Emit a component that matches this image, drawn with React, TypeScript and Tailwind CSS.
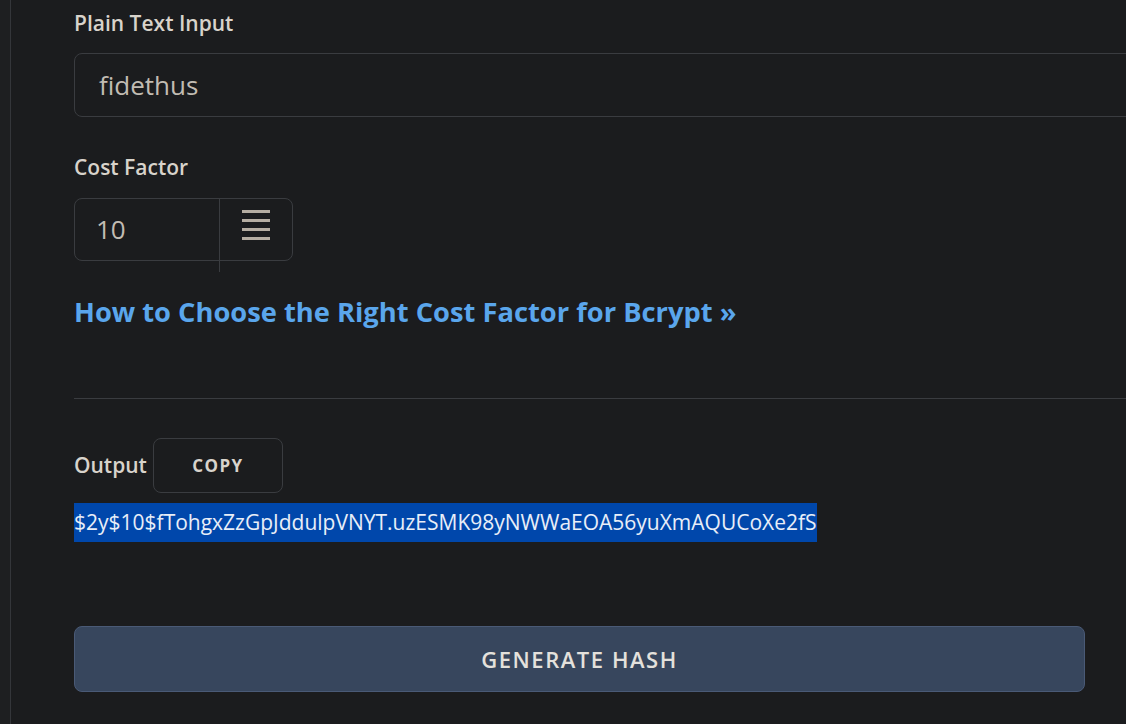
export default function App() {
  const font = { fontFamily: '"Open Sans", "Noto Sans", sans-serif' };
  return (
    <div className="flex h-[724px] w-[1126px] overflow-hidden bg-[#1b1c1e]" style={font}>
      <div className="w-[11px] shrink-0 border-r border-[#34363a] bg-[#1e1f21]" />
      <div className="flex min-w-0 flex-1 flex-col pl-[63px]">
        <label className="mt-[9px] text-[21px] font-semibold leading-[28px] text-[#d8d3cb]">Plain Text Input</label>
        <div className="mt-[16px] -mr-[20px] flex h-[64px] items-center rounded-[8px] border border-[#3a3c40] bg-[#1b1c1e] pl-[24px]">
          <span className="text-[26px] text-[#c2bcb3]">fidethus</span>
        </div>

        <label className="mt-[36px] text-[21px] font-semibold leading-[28px] text-[#d8d3cb]">Cost Factor</label>
        <div className="relative mt-[17px] flex h-[63px] w-[219px] rounded-[8px] border border-[#3a3c40]">
          <div className="flex w-[145px] items-center pl-[21px] text-[26px] text-[#c2bcb3]">10</div>
          <div className="absolute left-[144px] top-0 h-[73px] w-px bg-[#3a3c40]" />
          <div className="flex flex-1 flex-col gap-[6px] pl-[22px] pt-[11px]">
            <div className="h-[3px] w-[28px] bg-[#b5ada2]" />
            <div className="h-[3px] w-[28px] bg-[#b5ada2]" />
            <div className="h-[3px] w-[28px] bg-[#b5ada2]" />
            <div className="h-[3px] w-[28px] bg-[#b5ada2]" />
          </div>
        </div>

        <a className="mt-[33px] text-[27.3px] font-bold leading-[36px] text-[#5aa6ec]">
          How to Choose the Right Cost Factor for Bcrypt »
        </a>

        <div className="mt-[68px] h-px bg-[#3a3c40]" />

        <div className="mt-[39px] flex items-center gap-[6px]">
          <span className="text-[21px] font-semibold text-[#d8d3cb]">Output</span>
          <button className="h-[55px] w-[130px] rounded-[8px] border border-[#3a3c40] text-[17px] font-bold tracking-[0.08em] text-[#d8d3cb]">
            COPY
          </button>
        </div>

        <div className="mt-[10px] flex">
          <span className="bg-[#0047ab] text-[21px] leading-[39px] text-[#e8eef8]">
            $2y$10$fTohgxZzGpJddulpVNYT.uzESMK98yNWWaEOA56yuXmAQUCoXe2fS
          </span>
        </div>

        <button className="mt-[84px] mr-[41px] h-[66px] rounded-[8px] border border-[#4a5a76] bg-[#37465d] text-[22px] font-semibold tracking-[0.07em] text-[#e4e1dc]">
          GENERATE HASH
        </button>
      </div>
    </div>
  );
}
